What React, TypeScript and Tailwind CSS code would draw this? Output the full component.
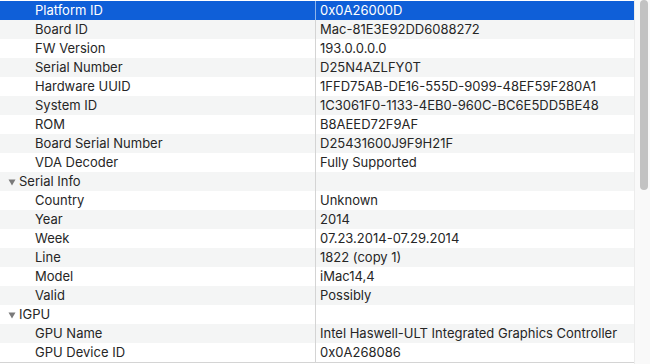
type Row = { key: string; value?: string; group?: boolean };

const rows: Row[] = [
  { key: "Platform ID", value: "0x0A26000D" },
  { key: "Board ID", value: "Mac-81E3E92DD6088272" },
  { key: "FW Version", value: "193.0.0.0.0" },
  { key: "Serial Number", value: "D25N4AZLFY0T" },
  { key: "Hardware UUID", value: "1FFD75AB-DE16-555D-9099-48EF59F280A1" },
  { key: "System ID", value: "1C3061F0-1133-4EB0-960C-BC6E5DD5BE48" },
  { key: "ROM", value: "B8AEED72F9AF" },
  { key: "Board Serial Number", value: "D25431600J9F9H21F" },
  { key: "VDA Decoder", value: "Fully Supported" },
  { key: "Serial Info", group: true },
  { key: "Country", value: "Unknown" },
  { key: "Year", value: "2014" },
  { key: "Week", value: "07.23.2014-07.29.2014" },
  { key: "Line", value: "1822 (copy 1)" },
  { key: "Model", value: "iMac14,4" },
  { key: "Valid", value: "Possibly" },
  { key: "IGPU", group: true },
  { key: "GPU Name", value: "Intel Haswell-ULT Integrated Graphics Controller" },
  { key: "GPU Device ID", value: "0x0A268086" },
];

function Triangle() {
  return (
    <svg width="8" height="7" viewBox="0 0 8 7" className="mr-[3px]">
      <path d="M0.5 0.5 H7.5 L4 6.5 Z" fill="#7a7a7a" />
    </svg>
  );
}

export default function App() {
  return (
    <div
      className="w-[650px] h-[364px] bg-white flex overflow-hidden text-[13px] text-[#262626]"
      style={{ fontFamily: "Inter, 'Liberation Sans', sans-serif" }}
    >
      <div className="w-[634px] pt-[1px] flex flex-col">
        <div className="border-b border-[#d4d4d4] flex flex-col">
          {rows.map((r, i) => {
            const selected = i === 0;
            const bg = selected ? "bg-[#0f5fd8] text-white" : i % 2 === 1 ? "bg-[#f4f5f5]" : "bg-white";
            return (
              <div key={r.key} className={`h-[19px] flex items-center ${bg}`}>
                <div
                  className={`w-[315px] h-full pt-[1px] flex items-center ${r.group ? "pl-[8px]" : "pl-[35px]"}`}
                >
                  {r.group && <Triangle />}
                  <span>{r.key}</span>
                </div>
                <div
                  className={`flex-1 h-full pt-[1px] flex items-center pl-[4px] border-l ${
                    selected ? "border-[#8fb4ea]" : "border-[#d4d4d4]"
                  }`}
                >
                  {r.value}
                </div>
              </div>
            );
          })}
        </div>
      </div>
      <div className="flex-1 bg-[#f9f9f9] border-l border-[#ececec] flex justify-center">
        <div className="w-[8px] h-[190px] rounded-full bg-[#c2c2c2] ml-[2px]" />
      </div>
    </div>
  );
}
